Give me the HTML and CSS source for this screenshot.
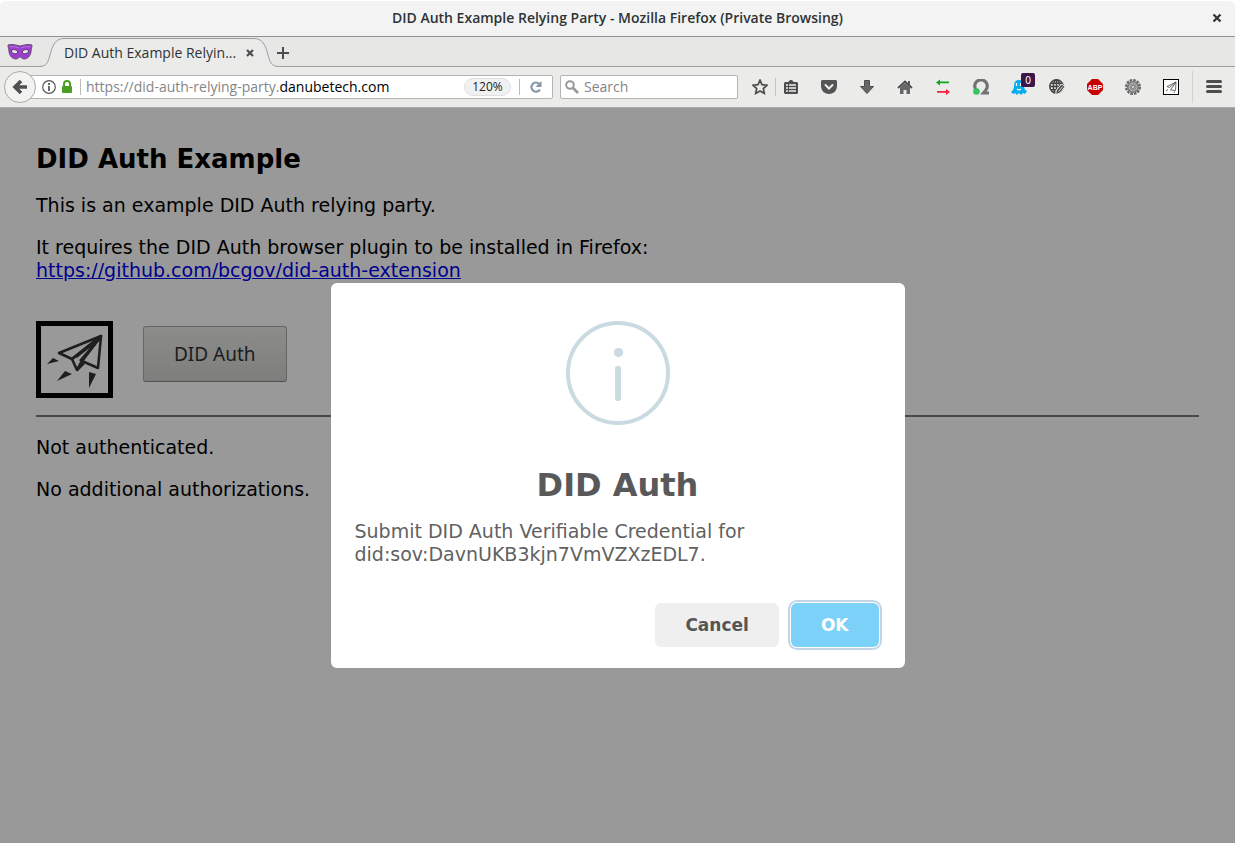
FILE: index.html
```html
<!DOCTYPE html>
<html lang="en">
<head>
<meta charset="utf-8">
<title>DID Auth Example Relying Party</title>
<link rel="stylesheet" href="styles.css">
</head>
<body>
<svg class="defs" aria-hidden="true">
  <symbol id="plane" viewBox="0 0 67 67">
    <g fill="none" stroke="currentColor" stroke-width="2.6" stroke-linejoin="round">
      <path d="M60 10 18 27l13 6z"/>
      <path d="M60 10 31 33l5 11 5-9z"/>
      <path d="M60 10 41 35l16 7z"/>
      <path d="m36 44 7-7"/>
      <path d="M59 12 35 31M59 12 39 35"/>
    </g>
    <path fill="currentColor" d="m6 38 6-6 6 3zM16 55l8-10 7 3zM48 46l7 2-7 14z"/>
  </symbol>
</svg>
<div class="window">
  <header class="titlebar">
    <h1 class="window-title">DID Auth Example Relying Party - Mozilla Firefox (Private Browsing)</h1>
    <button class="icon-button window-close" aria-label="Close window">
      <svg width="10" height="10" viewBox="0 0 10 10"><path d="m1.500 1.500 7 7m0-7-7 7" stroke="#2e3436" stroke-width="2.200"/></svg>
    </button>
  </header>

  <nav class="tabstrip" aria-label="Tabs">
    <svg class="mask" width="26" height="18" viewBox="0 0 26 18">
      <path d="M1 2c4-1 8 0 12 1 4-1 8-2 12-1 0 3-1 4-1 7-1 5-4 7-7 7-2 0-3-2-4-2s-2 2-4 2c-3 0-6-2-7-7 0-3-1-4-1-7z" fill="#9a40cc" stroke="#6c5078"/>
      <path d="M4 8c2-2 5-2 7 1-2 3-5 2-7-1zm18 0c-2-2-5-2-7 1 2 3 5 2 7-1z" fill="#e7e7e5" stroke="#57286f"/>
      <path d="M3 4c3-1 6 0 9 1m11-1c-3-1-6 0-9 1" stroke="#bd74df" fill="none"/>
    </svg>
    <div class="tab">
      <svg class="curve" width="24" height="30" viewBox="0 0 24 30"><path d="M0 28.500C7 28 8 24 10 17S14 .5 24 .5V30H0z" fill="#ebebe9"/><path d="M0 28.500C7 28 8 24 10 17S14 .5 24 .5" fill="none" stroke="#989ea6"/></svg>
      <div class="tab-body">
        <span class="tab-title">DID Auth Example Relyin...</span>
        <button class="icon-button" aria-label="Close tab">
          <svg width="8" height="8" viewBox="0 0 8 8"><path d="m1 1 6 6m0-6L1 7" stroke="#4b4f50" stroke-width="2.200"/></svg>
        </button>
      </div>
      <svg class="curve" width="24" height="30" viewBox="0 0 24 30"><path d="M24 28.500C17 28 16 24 14 17S10 .5 0 .5V30H24z" fill="#ebebe9"/><path d="M24 28.500C17 28 16 24 14 17S10 .5 0 .5" fill="none" stroke="#989ea6"/></svg>
    </div>
    <button class="icon-button new-tab" aria-label="New tab">
      <svg width="12" height="12" viewBox="0 0 12 12"><path d="M6 0v12M0 6h12" stroke="#4b4f50" stroke-width="2"/></svg>
    </button>
  </nav>

  <div class="toolbar">
    <button class="back" aria-label="Back">
      <svg width="16" height="16" viewBox="0 0 16 16"><path d="M9 2 3 8l6 6M3 8h12" fill="none" stroke="#4f5050" stroke-width="3.600"/></svg>
    </button>
    <div class="urlbar">
      <svg width="14" height="14" viewBox="0 0 14 14"><circle cx="7" cy="7" r="6.300" fill="none" stroke="#555" stroke-width="1.200"/><path d="M7 6v5M7 3v2" stroke="#444" stroke-width="1.600"/></svg>
      <svg width="14" height="14" viewBox="0 0 14 14"><path d="M3 7V4a3 3 0 0 1 6 0v3" fill="none" stroke="#4a9e22" stroke-width="2"/><rect x="1" y="6" width="10" height="7" rx="1" fill="#4a9e22"/></svg>
      <i class="url-divider"></i>
      <div class="url" role="textbox" aria-label="Address"><span class="url-sub">https://did-auth-relying-party.</span>danubetech.com</div>
      <button class="zoom-level">120%</button>
      <i class="url-divider"></i>
      <button class="icon-button reload" aria-label="Reload">
        <svg width="14" height="14" viewBox="0 0 14 14"><path d="M11 9.500A4.600 4.600 0 1 1 10.300 3.800" fill="none" stroke="#8698a8" stroke-width="2.200"/><path d="M12.500 1v6H6.500z" fill="#8698a8"/></svg>
      </button>
    </div>
    <label class="search">
      <svg width="14" height="14" viewBox="0 0 14 14"><circle cx="5" cy="5" r="3.800" fill="none" stroke="#999" stroke-width="2"/><path d="m8 8 5 5" stroke="#999" stroke-width="2.600"/></svg>
      <input class="search-input" type="search" placeholder="Search" aria-label="Search">
    </label>
    <div class="star-group">
      <button class="icon-button" aria-label="Bookmark this page">
        <svg width="16" height="16" viewBox="0 0 16 16"><path d="m8 1.200 2 4.500 5 .5-3.700 3.300 1 4.900L8 11.900l-4.300 2.500 1-4.900L1 6.200l5-.5z" fill="none" stroke="#4d4d4d" stroke-width="1.700"/></svg>
      </button>
      <i class="tool-divider"></i>
    </div>
    <div class="tools">
      <button class="icon-button" aria-label="Bookmarks">
        <svg width="16" height="16" viewBox="0 0 16 16"><path d="M2 3h3c1 0 1-2 3-2s2 2 3 2h3l1 1v10l-1 1H2l-1-1V4z" fill="#4d4d4d"/><path d="M3 6h2m1 0h7M3 9h2m1 0h7M3 12h2m1 0h7" stroke="#eee" stroke-width="1.500"/></svg>
      </button>
      <button class="icon-button" aria-label="Pocket">
        <svg width="16" height="16" viewBox="0 0 16 16"><path d="M1 1h14l1 1v5c0 5-4 8-8 8S0 12 0 7V2z" fill="#555"/><path d="m4.500 6 3.500 3.500L11.500 6" fill="none" stroke="#eee" stroke-width="2" stroke-linecap="round"/></svg>
      </button>
      <button class="icon-button" aria-label="Downloads">
        <svg width="16" height="16" viewBox="0 0 16 16"><path d="M5.500 1.500h5v6h4L8 14.500 1.500 7.500h4z" fill="#666" stroke="#4d4d4d"/></svg>
      </button>
      <button class="icon-button" aria-label="Home">
        <svg width="16" height="16" viewBox="0 0 16 16"><path d="M3 8.500 8 4l5 4.500V15H9.500v-4h-3v4H3z" fill="#666"/><path d="M1 9 8 2.500 15 9M12 2v4" fill="none" stroke="#4d4d4d" stroke-width="1.800"/></svg>
      </button>
      <button class="icon-button" aria-label="Sync">
        <svg width="16" height="16" viewBox="0 0 16 16"><path d="M1 3.500 5 .5v2h9v1.800H5v2.200z" fill="#12a528"/><path d="m15 13-4-3v2H2v1.800h9V16z" fill="#f71f3a"/></svg>
      </button>
      <button class="icon-button" aria-label="Privacy status">
        <svg width="16" height="16" viewBox="0 0 16 16"><path d="M3.500 11.500A6.300 6.300 0 1 1 12.500 11.500L10.500 14h5.500" fill="none" stroke="#707274" stroke-width="3.200"/><circle cx="3.500" cy="12.500" r="3.300" fill="#36c45e"/></svg>
      </button>
      <button class="icon-button badge-host" aria-label="Tracker blocker, 0 blocked">
        <svg width="16" height="16" viewBox="0 0 16 16"><path d="M3 7c0-4 2-6 5-6s5 2 5 6c0 3 1 4 3 5l-2 3-2-1-2 2-2-2-2 2-2-2-2 1-2-2c2-2 3-3 3-6z" fill="#00aef0"/><path d="M5.500 4v3m4-3v3M6 10c1 1 3 1 4 0" stroke="#fff" fill="none" stroke-width="1.300"/></svg>
        <span class="badge">0</span>
      </button>
      <button class="icon-button" aria-label="Page editor">
        <svg width="16" height="16" viewBox="0 0 16 16"><g fill="none" stroke="#444" stroke-width="1.500"><circle cx="7.500" cy="7.500" r="6.700"/><ellipse cx="7.500" cy="7.500" rx="3.200" ry="6.500"/><path d="M1 7.500h13M2 4.200h11M2 10.800h11M7.500 1v13"/></g><path d="m6.500 15.500 1-4.500 5-6 3.500 2.500-5 6.500z" fill="#4d4d4d" stroke="#ebebe9"/><path d="m9.500 12.500 4-5" stroke="#ddd"/></svg>
      </button>
      <button class="icon-button" aria-label="Adblock Plus">
        <svg width="16" height="16" viewBox="0 0 16 16"><path d="M5 0h6l5 5v6l-5 5H5l-5-5V5z" fill="#c90000"/><text x="8" y="11" class="abp-text">ABP</text></svg>
      </button>
      <button class="icon-button" aria-label="Settings">
        <svg width="16" height="16" viewBox="0 0 16 16"><circle cx="8" cy="8" r="6.800" fill="none" stroke="#666" stroke-width="2.400" stroke-dasharray="2.560 1"/><circle cx="8" cy="8" r="5.200" fill="#c4c4c4" stroke="#777" stroke-width="1.600"/><circle cx="8" cy="8" r="3.200" fill="#aaa" stroke="#888"/><circle cx="8" cy="8" r="1.500" fill="#eee" stroke="#777"/></svg>
      </button>
      <button class="icon-button" aria-label="DID Auth">
        <svg width="16" height="16" viewBox="0 0 16 16"><rect x=".5" y=".5" width="15" height="15" fill="#fff" stroke="#000"/><path d="m13 3-9 4.500 2.500 1L13 3 7.500 11l5 .5zM3 12l2-1.500M11 14l.5-1.500" fill="none" stroke="#444" stroke-width=".8"/></svg>
      </button>
    </div>
    <i class="menu-divider"></i>
    <button class="icon-button" aria-label="Menu">
      <svg width="16" height="14" viewBox="0 0 16 14"><path d="M1.500 1.500h13M1.500 6.500h13M1.500 11.500h13" stroke="#4d4d4d" stroke-width="3" stroke-linecap="round"/></svg>
    </button>
  </div>

  <div class="viewport">
    <main class="page">
      <h2 class="page-heading">DID Auth Example</h2>
      <p>This is an example DID Auth relying party.</p>
      <p>It requires the DID Auth browser plugin to be installed in Firefox:<br><a href="https://github.com/bcgov/did-auth-extension">https://github.com/bcgov/did-auth-extension</a></p>
      <div class="auth-row">
        <svg class="logo" width="67" height="67" role="img" aria-label="Paper plane"><use href="#plane"/></svg>
        <button class="auth-button">DID Auth</button>
      </div>
      <hr class="rule">
      <p>Not authenticated.</p>
      <p>No additional authorizations.</p>
    </main>
    <div class="overlay">
      <section class="modal" role="dialog" aria-modal="true" aria-labelledby="modal-title">
        <svg class="modal-icon" width="104" height="104" viewBox="0 0 104 104"><circle cx="52" cy="52" r="50" fill="none" stroke="#c9dae1" stroke-width="4"/><circle cx="52.500" cy="31.500" r="4.600" fill="#c9dae1"/><rect x="49" y="45" width="6" height="35" rx="2.500" fill="#c9dae1"/></svg>
        <h2 class="modal-title" id="modal-title">DID Auth</h2>
        <p class="modal-text">Submit DID Auth Verifiable Credential for did:sov:DavnUKB3kjn7VmVZXzEDL7.</p>
        <div class="modal-actions">
          <button class="modal-button">Cancel</button>
          <button class="modal-button primary">OK</button>
        </div>
      </section>
    </div>
  </div>
</div>
</body>
</html>
```
FILE: styles.css
```css
* {
  box-sizing: border-box;
}

body {
  margin: 0;
}

svg {
  display: block;
  flex: none;
}

.defs {
  position: absolute;
  width: 0;
  height: 0;
}

.window {
  display: flex;
  flex-direction: column;
  min-height: 100vh;
  font-family: "Open Sans", "Noto Sans", sans-serif;
  font-size: 14px;
  color: #2e3436;
}

.icon-button {
  display: block;
  flex: none;
  padding: 0;
  border: 0;
  background: none;
}

/* Title bar */
.titlebar {
  display: grid;
  grid-template-columns: 23px 1fr 23px;
  align-items: center;
  height: 37px;
  padding-bottom: 2px;
  border-top: 1px solid #fff;
  border-bottom: 1px solid #92938f;
  border-radius: 6px 6px 0 0;
  background: #f3f3f3;
}

.window-title {
  grid-column: 2;
  margin: 0;
  font-size: 14px;
  font-weight: 600;
  line-height: 20px;
  text-align: center;
}

/* Tabs */
.tabstrip {
  display: flex;
  align-items: center;
  height: 30px;
  padding-left: 7px;
  border-bottom: 1px solid #9f9f9c;
  background: #e7e7e5;
}

.tab {
  display: flex;
  height: 30px;
  margin: 2px 0 0 7px;
}

.tab-body {
  display: flex;
  align-items: center;
  justify-content: space-between;
  width: 190px;
  border-top: 1px solid #989ea6;
  background: #ebebe9;
}

.tab-title {
  line-height: 20px;
  white-space: nowrap;
}

.new-tab {
  margin: 2px 0 0 -1px;
}

/* Navigation toolbar */
.toolbar {
  display: flex;
  align-items: center;
  height: 41px;
  padding: 0 13px 0 4px;
  border-bottom: 1px solid #aaa;
  background: #ebebe9;
}

.back {
  z-index: 1;
  display: grid;
  place-items: center;
  flex: none;
  width: 32px;
  height: 32px;
  padding: 0;
  border: 1px solid #aaa;
  border-radius: 50%;
  background: #f3f3f2;
}

.urlbar {
  display: flex;
  align-items: center;
  flex: 1;
  gap: 5px;
  height: 24px;
  margin: 0 7px 0 -8px;
  padding: 0 9px 0 13px;
  border: 1px solid #b4b4b2;
  border-radius: 2px;
  background: #fff;
}

.url-divider {
  width: 1px;
  height: 16px;
  background: #bbb;
}

.url {
  flex: 1;
  line-height: 20px;
  white-space: nowrap;
  color: #000;
}

.url-sub {
  color: #858585;
}

.zoom-level {
  width: 47px;
  height: 18px;
  margin-right: 3px;
  padding: 0;
  border: 1px solid #e0e0e0;
  border-radius: 9px;
  background: #f1f1f1;
  font-family: inherit;
  font-size: 12px;
  line-height: 16px;
  color: #222;
}

.reload {
  margin-left: 4px;
}

.search {
  display: flex;
  align-items: center;
  gap: 5px;
  width: 178px;
  height: 24px;
  padding: 0 4px;
  border: 1px solid #b4b4b2;
  border-radius: 2px;
  background: #fff;
}

.search-input {
  flex: 1;
  min-width: 0;
  padding: 0;
  border: 0;
  outline: 0;
  background: none;
  font-family: inherit;
  font-size: 14px;
  line-height: 20px;
}

.search-input::placeholder {
  color: #858585;
}

.star-group {
  display: flex;
  align-items: center;
  gap: 7px;
  padding: 0 7px 0 14px;
}

.tool-divider {
  width: 1px;
  height: 18px;
  background: #c4c4c2;
}

.tools {
  display: flex;
  gap: 22px;
}

.badge-host {
  position: relative;
}

.badge {
  position: absolute;
  top: -6px;
  left: 10px;
  width: 14px;
  height: 14px;
  border-radius: 2px;
  background: #3d1548;
  font-family: "Noto Sans", sans-serif;
  font-size: 10px;
  line-height: 14px;
  text-align: center;
  color: #fff;
}

.abp-text {
  font-family: "Liberation Sans", sans-serif;
  font-size: 7px;
  font-weight: 700;
  text-anchor: middle;
  fill: #fff;
}

.menu-divider {
  width: 1px;
  height: 32px;
  margin: 0 13px;
  background: #d2d2d0;
}

/* Web page */
.viewport {
  position: relative;
  display: flex;
  flex: 1;
  flex-direction: column;
  font-family: "DejaVu Sans", sans-serif;
  font-size: 19px;
  line-height: 23px;
}

.page {
  flex: 1;
  padding: 36px;
  background: #fff;
  color: #000;
}

.page p {
  margin: 0 0 19px;
}

.page a {
  color: #0000ee;
}

.page-heading {
  margin: 0 0 19px;
  font-size: 26px;
  line-height: 31px;
}

.auth-row {
  display: flex;
  align-items: flex-start;
  gap: 30px;
  margin-top: 39px;
}

.logo {
  box-sizing: content-box;
  border: 5px solid #000;
  color: #333;
}

.auth-button {
  height: 56px;
  margin-top: 5px;
  padding: 0 30px;
  border: 1px solid #aaa;
  border-bottom-color: #888;
  border-radius: 3px;
  background: linear-gradient(#eaeae8, #d2d2ce);
  font-family: "Noto Sans", sans-serif;
  font-size: 19px;
  color: #2e3436;
}

.rule {
  height: 2px;
  margin: 17px 0 19px;
  border: 0;
  background: #777;
}

/* Dialog */
.overlay {
  position: absolute;
  inset: 0;
  display: flex;
  align-items: center;
  justify-content: center;
  background: rgba(0, 0, 0, 0.4);
}

.modal {
  width: 574px;
  max-width: 100%;
  padding: 38px 24px 21px;
  border-radius: 6px;
  background: #fff;
}

.modal-icon {
  margin: 0 auto 40px;
}

.modal-title {
  margin: 0 0 15px;
  font-size: 32px;
  line-height: 40px;
  text-align: center;
  color: #595959;
}

.modal-text {
  max-width: 440px;
  margin: 0 0 37px;
  color: #616161;
}

.modal-actions {
  display: flex;
  justify-content: flex-end;
  gap: 12px;
  padding-right: 2px;
}

.modal-button {
  height: 44px;
  padding: 0 30px;
  border: 0;
  border-radius: 6px;
  background: #efefef;
  font-family: "DejaVu Sans", sans-serif;
  font-size: 17px;
  font-weight: 700;
  color: #555;
}

.modal-button.primary {
  background: #7cd1f9;
  box-shadow: 0 0 0 1px #fff, 0 0 0 3px #c2d5e6;
  color: #fff;
}
```
